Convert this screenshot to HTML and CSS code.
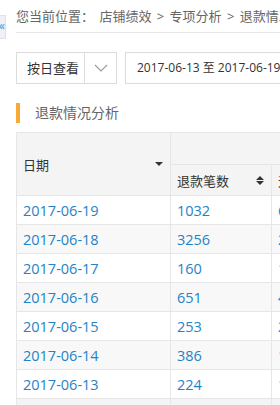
FILE: index.html
```html
<!DOCTYPE html>
<html lang="zh-CN">
<head>
<meta charset="UTF-8">
<meta name="viewport" content="width=device-width, initial-scale=1.0">
<title>退款情况分析</title>
<link rel="stylesheet" href="styles.css">
</head>
<body>
<div class="side-toggle">«</div>
<div id="main">
  <div class="crumb">您当前位置： 店铺绩效 &gt; 专项分析 &gt; 退款情况分析</div>

  <div class="toolbar">
    <div class="select">
      <span class="select-label">按日查看</span>
      <span class="select-arrow">
        <svg width="14" height="8" viewBox="0 0 14 8"><path d="M1 1 L7 7 L13 1" fill="none" stroke="#9a9a9a" stroke-width="1.1"/></svg>
      </span>
    </div>
    <div class="date-range">2017-06-13 至 2017-06-19</div>
  </div>

  <div class="section-title">退款情况分析</div>

  <table id="refundTable">
    <thead>
      <tr>
        <th rowspan="2" class="col-date">日期<span class="caret"></span></th>
        <th colspan="3" class="group"></th>
      </tr>
      <tr>
        <th class="col-num">退款笔数<span class="sort"></span></th>
        <th class="col-num">退款金额<span class="sort"></span></th>
        <th class="col-num">退款率</th>
      </tr>
    </thead>
    <tbody>
      <tr><td>2017-06-19</td><td>1032</td><td>6540.00</td><td>1.2%</td></tr>
      <tr><td>2017-06-18</td><td>3256</td><td>2380.00</td><td>1.1%</td></tr>
      <tr><td>2017-06-17</td><td>160</td><td>1120.00</td><td>0.9%</td></tr>
      <tr><td>2017-06-16</td><td>651</td><td>4310.00</td><td>1.0%</td></tr>
      <tr><td>2017-06-15</td><td>253</td><td>2190.00</td><td>0.8%</td></tr>
      <tr><td>2017-06-14</td><td>386</td><td>1760.00</td><td>0.7%</td></tr>
      <tr><td>2017-06-13</td><td>224</td><td>1430.00</td><td>0.6%</td></tr>
      <tr class="total"><td>合计</td><td>5962</td><td>19730.00</td><td>0.9%</td></tr>
    </tbody>
  </table>
</div>
</body>
</html>
```

FILE: styles.css
```css
html, body {
  margin: 0;
  padding: 0;
  background-color: white;
  font-family: "Open Sans", "Noto Sans CJK SC", sans-serif;
  color: #333;
  overflow: hidden;
}

#main {
  padding-left: 16px;
  position: relative;
}

/* collapsed sidebar handle, mostly off screen */
.side-toggle {
  position: absolute;
  left: -8px;
  top: 15px;
  width: 12px;
  height: 22px;
  background-color: #eef1f5;
  border: 1px solid #dfe3e8;
  color: #4a90d0;
  font-size: 12px;
  line-height: 20px;
  text-align: right;
  z-index: 2;
}

.crumb {
  height: 32px;
  line-height: 32px;
  font-size: 13px;
  word-spacing: 2px;
  color: #666;
  white-space: nowrap;
  border-bottom: 1px solid #e6e6e6;
}

.toolbar {
  display: flex;
  gap: 8px;
  margin-top: 19px;
  height: 32px;
}

.select {
  display: flex;
  width: 99px;
  border: 1px solid #dcdcdc;
  flex-shrink: 0;
}

.select-label {
  width: 68px;
  padding-left: 10px;
  font-size: 13px;
  line-height: 30px;
  color: #333;
  border-right: 1px solid #dcdcdc;
  box-sizing: border-box;
}

.select-arrow {
  flex: 1;
  display: flex;
  align-items: center;
  justify-content: center;
}

.date-range {
  border: 1px solid #dcdcdc;
  padding-left: 11px;
  width: 260px;
  flex-shrink: 0;
  font-size: 12px;
  line-height: 30px;
  white-space: nowrap;
  color: #333;
}

.section-title {
  margin-top: 19px;
  height: 20px;
  line-height: 20px;
  border-left: 4px solid #f8a936;
  padding-left: 15px;
  font-size: 14px;
  color: #666;
}

table {
  margin-top: 9px;
  border-collapse: collapse;
  table-layout: fixed;
  width: 458px;
  font-size: 13px;
}

th, td {
  border: 1px solid #e6e6e6;
  text-align: left;
  padding: 0 6px;
  white-space: nowrap;
  overflow: hidden;
}

th {
  background-color: #f4f4f4;
  font-weight: normal;
  color: #333;
  position: relative;
}

th.col-date {
  width: 141px;
}

th.group {
  height: 31px;
}

th.col-num {
  width: 88px;
  height: 30px;
}

.caret {
  position: absolute;
  right: 7px;
  top: 50%;
  margin-top: -2px;
  border-left: 4px solid transparent;
  border-right: 4px solid transparent;
  border-top: 4px solid #333;
}

.sort {
  position: absolute;
  right: 7px;
  top: 50%;
  margin-top: -4px;
  width: 8px;
  height: 9px;
}

.sort::before, .sort::after {
  content: "";
  position: absolute;
  left: 0;
  border-left: 4px solid transparent;
  border-right: 4px solid transparent;
}

.sort::before {
  top: 0;
  border-bottom: 4px solid #333;
}

.sort::after {
  bottom: 0;
  border-top: 4px solid #333;
}

td {
  height: 28px;
  font-size: 14.5px;
  color: #1f83c6;
}

tbody tr:nth-child(even) td {
  background-color: #f8f8f8;
}

tbody tr.total td {
  background-color: #f4f4f4;
  color: #333;
}
```
